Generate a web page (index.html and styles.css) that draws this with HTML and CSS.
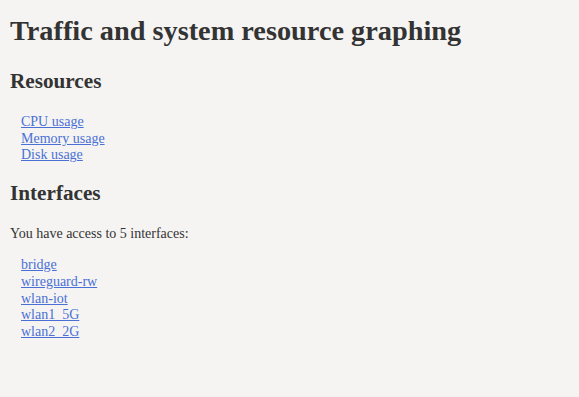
FILE: index.html
```html
<!DOCTYPE html>
<html lang="en">
  <head>
    <meta charset="UTF-8" />
    <meta name="viewport" content="width=device-width, initial-scale=1.0" />
    <title>Traffic and system resource graphing</title>
    <link rel="stylesheet" href="styles.css">
  </head>
  <body>
    <h1 class="title">Traffic and system resource graphing</h1>

    <h2 class="section-title">Resources</h2>
    <ul class="link-list">
      <li><a href="#cpu">CPU usage</a></li>
      <li><a href="#memory">Memory usage</a></li>
      <li><a href="#disk">Disk usage</a></li>
    </ul>

    <h2 class="section-title">Interfaces</h2>
    <p class="note">You have access to 5 interfaces:</p>
    <ul class="link-list">
      <li><a href="#bridge">bridge</a></li>
      <li><a href="#wireguard-rw">wireguard-rw</a></li>
      <li><a href="#wlan-iot">wlan-iot</a></li>
      <li><a href="#wlan1_5G">wlan1_5G</a></li>
      <li><a href="#wlan2_2G">wlan2_2G</a></li>
    </ul>
  </body>
</html>
```

FILE: styles.css
```css
body {
  margin: 0;
  padding: 14px 10px;
  background-color: #f5f4f2;
  color: #333333;
  font-family: "Liberation Serif", "Times New Roman", serif;
  font-size: 14px;
  line-height: 1.2;
}
.title {
  font-size: 28.3px;
  margin: 0 0 21px;
}
.section-title {
  font-size: 21.2px;
  margin: 0 0 19.5px;
}
.link-list {
  list-style: none;
  margin: 0 0 17px;
  padding-left: 11px;
}
.link-list a {
  color: #4a70d6;
}
.note {
  margin: 0 0 14px;
}
```
